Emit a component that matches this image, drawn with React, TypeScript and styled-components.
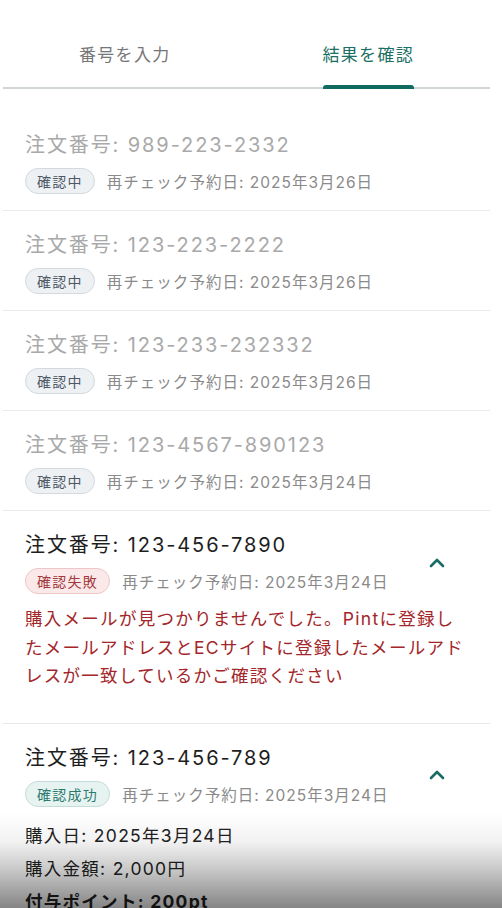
import React from 'react'
import styled, { createGlobalStyle } from 'styled-components'
import { ChevronUp } from 'lucide-react'

const GlobalStyle = createGlobalStyle`
  html, body {
    margin: 0;
    padding: 0;
    background: #fff;
  }
  body {
    font-family: Inter, "Noto Sans CJK JP", sans-serif;
    letter-spacing: 0.08em;
    overflow: hidden;
  }
`

const Page = styled.div`
  height: 908px;
  padding: 0 12px 0 3px;
  overflow: hidden;
`

const TabBar = styled.div`
  display: grid;
  grid-template-columns: 1fr 1fr;
  padding-top: 39px;
  border-bottom: 2px solid #d0d6d6;
`

const Tab = styled.div<{ $active?: boolean }>`
  display: flex;
  justify-content: center;
  padding-bottom: 16px;
  font-size: 17px;
  line-height: 32px;
  color: ${p => (p.$active ? '#1b6f64' : '#777')};
`

const TabLabel = styled.span<{ $active?: boolean }>`
  position: relative;

  &::after {
    content: '';
    display: ${p => (p.$active ? 'block' : 'none')};
    position: absolute;
    left: 0;
    right: 0;
    bottom: -18px;
    height: 4px;
    border-radius: 3px 3px 0 0;
    background: #0f6b60;
  }
`

const List = styled.div`
  padding-top: 22px;
`

const Item = styled.div`
  padding: 20px 20px 16px 22px;
  border-bottom: 1px solid #e9e9e9;
`

const Header = styled.div`
  display: flex;
  align-items: center;
`

const HeaderText = styled.div`
  flex: 1;
  display: flex;
  flex-direction: column;
`

const Title = styled.div<{ $muted?: boolean }>`
  font-size: 20px;
  line-height: 28px;
  letter-spacing: 0.095em;
  color: ${p => (p.$muted ? '#a9a9a9' : '#1e1e1e')};
`

const Meta = styled.div`
  display: flex;
  align-items: center;
  gap: 12px;
  margin-top: 9px;
`

const tones = {
  pending: { bg: '#eef1f4', border: '#d3d9de', color: '#4f5966' },
  failed: { bg: '#fbe9ea', border: '#efc6c8', color: '#a3393c' },
  success: { bg: '#e7f3f1', border: '#c3dcd7', color: '#2b7a6f' },
}

type Tone = keyof typeof tones

const Badge = styled.span<{ $tone: Tone }>`
  display: inline-flex;
  align-items: center;
  height: 26px;
  padding: 0 11px;
  box-sizing: border-box;
  border-radius: 13px;
  font-size: 14px;
  background: ${p => tones[p.$tone].bg};
  border: 1px solid ${p => tones[p.$tone].border};
  color: ${p => tones[p.$tone].color};
`

const DateText = styled.span`
  font-size: 15.5px;
  letter-spacing: 0.065em;
  color: #8a8a8a;
`

const ErrorText = styled.p`
  margin: 11px 0 16px;
  font-size: 17.5px;
  line-height: 28.5px;
  color: #a3262a;
`

const Details = styled.div`
  display: flex;
  flex-direction: column;
  margin-top: 12px;
`

const DetailLine = styled.div<{ $bold?: boolean }>`
  font-size: 17.5px;
  line-height: 33px;
  color: #222;
  font-weight: ${p => (p.$bold ? 700 : 400)};
`

const Toggle = styled.button`
  display: flex;
  align-items: center;
  justify-content: center;
  width: 28px;
  height: 28px;
  margin-right: 19px;
  padding: 0;
  border: none;
  background: none;
  color: #176d63;
`

const Shade = styled.div`
  position: fixed;
  left: 0;
  right: 0;
  bottom: 0;
  height: 95px;
  pointer-events: none;
  background: linear-gradient(
    to bottom,
    rgba(0, 0, 0, 0) 0%,
    rgba(0, 0, 0, 0.05) 30%,
    rgba(0, 0, 0, 0.22) 60%,
    rgba(0, 0, 0, 0.48) 100%
  );
`

type Order = {
  no: string
  status: Tone
  date: string
  error?: string
  details?: { label: string; bold?: boolean }[]
}

const statusLabel: Record<Tone, string> = {
  pending: '確認中',
  failed: '確認失敗',
  success: '確認成功',
}

const orders: Order[] = [
  { no: '989-223-2332', status: 'pending', date: '2025年3月26日' },
  { no: '123-223-2222', status: 'pending', date: '2025年3月26日' },
  { no: '123-233-232332', status: 'pending', date: '2025年3月26日' },
  { no: '123-4567-890123', status: 'pending', date: '2025年3月24日' },
  {
    no: '123-456-7890',
    status: 'failed',
    date: '2025年3月24日',
    error:
      '購入メールが見つかりませんでした。Pintに登録したメールアドレスとECサイトに登録したメールアドレスが一致しているかご確認ください',
  },
  {
    no: '123-456-789',
    status: 'success',
    date: '2025年3月24日',
    details: [
      { label: '購入日: 2025年3月24日' },
      { label: '購入金額: 2,000円' },
      { label: '付与ポイント: 200pt', bold: true },
    ],
  },
]

const App = () => {
  return (
    <>
      <GlobalStyle />
      <Page>
        <TabBar>
          <Tab>
            <TabLabel>番号を入力</TabLabel>
          </Tab>
          <Tab $active>
            <TabLabel $active>結果を確認</TabLabel>
          </Tab>
        </TabBar>
        <List>
          {orders.map(o => {
            const open = o.status !== 'pending'
            return (
              <Item key={o.no}>
                <Header>
                  <HeaderText>
                    <Title $muted={!open}>注文番号: {o.no}</Title>
                    <Meta>
                      <Badge $tone={o.status}>{statusLabel[o.status]}</Badge>
                      <DateText>再チェック予約日: {o.date}</DateText>
                    </Meta>
                  </HeaderText>
                  {open && (
                    <Toggle>
                      <ChevronUp size={24} strokeWidth={2.6} />
                    </Toggle>
                  )}
                </Header>
                {o.error && <ErrorText>{o.error}</ErrorText>}
                {o.details && (
                  <Details>
                    {o.details.map(d => (
                      <DetailLine key={d.label} $bold={d.bold}>
                        {d.label}
                      </DetailLine>
                    ))}
                  </Details>
                )}
              </Item>
            )
          })}
        </List>
      </Page>
      <Shade />
    </>
  )
}

export default App
